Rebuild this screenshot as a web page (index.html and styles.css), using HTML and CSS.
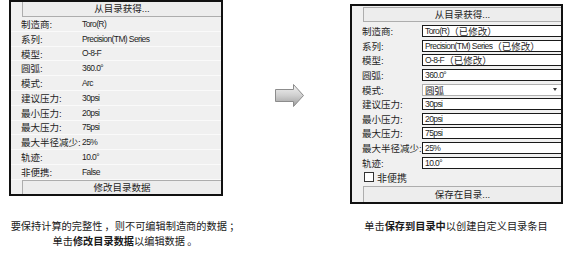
FILE: index.html
```html
<!DOCTYPE html>
<html lang="zh">

<head>
    <meta charset="UTF-8">
    <meta name="viewport" content="width=device-width, initial-scale=1.0">
    <title>目录数据</title>
    <link rel="stylesheet" href="styles.css">
</head>

<body>
    <div class="page">
        <div class="panel panel-left">
            <div class="btn btn-top">从目录获得...</div>
            <div class="row"><span class="label">制造商:</span><span class="value">Toro(R)</span></div>
            <div class="row"><span class="label">系列:</span><span class="value">Precision(TM) Series</span></div>
            <div class="row"><span class="label">模型:</span><span class="value">O-8-F</span></div>
            <div class="row"><span class="label">圆弧:</span><span class="value">360.0°</span></div>
            <div class="row"><span class="label">模式:</span><span class="value">Arc</span></div>
            <div class="row"><span class="label">建议压力:</span><span class="value">30psi</span></div>
            <div class="row"><span class="label">最小压力:</span><span class="value">20psi</span></div>
            <div class="row"><span class="label">最大压力:</span><span class="value">75psi</span></div>
            <div class="row"><span class="label">最大半径减少:</span><span class="value">25%</span></div>
            <div class="row"><span class="label">轨迹:</span><span class="value">10.0°</span></div>
            <div class="row"><span class="label">非便携:</span><span class="value">False</span></div>
            <div class="btn btn-bottom">修改目录数据</div>
        </div>

        <div class="arrow">
            <svg width="30" height="23" viewBox="0 0 30 23">
                <defs>
                    <linearGradient id="arrowFill" x1="0" y1="0" x2="0" y2="1">
                        <stop offset="0" stop-color="#f4f4f4" />
                        <stop offset="0.5" stop-color="#cfcfcf" />
                        <stop offset="1" stop-color="#9c9c9c" />
                    </linearGradient>
                </defs>
                <path d="M0.5 5.5 H18.5 V0.5 L28.5 11.5 L18.5 22.5 V17.5 H0.5 Z" fill="url(#arrowFill)" stroke="#8c8c8c" stroke-width="1" />
            </svg>
        </div>

        <div class="panel panel-right">
            <div class="btn btn-top">从目录获得...</div>
            <div class="fields">
                <div class="row"><span class="label">制造商:</span><span class="field"><span class="value">Toro(R)</span><span class="note">（已修改）</span></span></div>
                <div class="row"><span class="label">系列:</span><span class="field"><span class="value">Precision(TM) Series</span><span class="note">（已修改）</span></span></div>
                <div class="row"><span class="label">模型:</span><span class="field"><span class="value">O-8-F</span><span class="note">（已修改）</span></span></div>
                <div class="row"><span class="label">圆弧:</span><span class="field"><span class="value">360.0°</span></span></div>
                <div class="row"><span class="label">模式:</span><span class="field field-select"><span class="note">圆弧</span><span class="caret"></span></span></div>
                <div class="row"><span class="label">建议压力:</span><span class="field"><span class="value">30psi</span></span></div>
                <div class="row"><span class="label">最小压力:</span><span class="field"><span class="value">20psi</span></span></div>
                <div class="row"><span class="label">最大压力:</span><span class="field"><span class="value">75psi</span></span></div>
                <div class="row"><span class="label">最大半径减少:</span><span class="field"><span class="value">25%</span></span></div>
                <div class="row"><span class="label">轨迹:</span><span class="field"><span class="value">10.0°</span></span></div>
                <div class="row check-row"><span class="checkbox"></span><span>非便携</span></div>
            </div>
            <div class="btn btn-save">保存在目录...</div>
        </div>

        <p class="caption caption-left">要保持计算的完整性 ，则不可编辑制造商的数据 ；<br>单击<b>修改目录数据</b>以编辑数据 。</p>
        <p class="caption caption-right">单击<b>保存到目录中</b>以创建自定义目录条目</p>
    </div>
</body>

</html>
```

FILE: styles.css
```css
body {
    margin: 0;
    font-family: "Liberation Sans", "Noto Sans CJK SC", sans-serif;
    background-color: #ffffff;
    color: #1e1e1e;
}

.page {
    display: grid;
    grid-template-columns: 250px 90px 224px;
    grid-template-rows: 206px auto;
}

.panel {
    box-sizing: border-box;
    border: 2px solid #111111;
    background: #f0f0f0;
    overflow: hidden;
    font-size: 9.5px;
}

.panel-left {
    margin-left: 9px;
    width: 214px;
    height: 196px;
}

.panel-right {
    margin: 4px 0 0 10px;
    width: 213px;
    height: 200px;
}

.btn {
    box-sizing: border-box;
    margin-left: 11px;
    background: #ededed;
    border: 1px solid #adadad;
    border-right: none;
    text-align: center;
}

.panel-left .btn-top {
    height: 15px;
    line-height: 14px;
    border-top: none;
}

.btn-bottom {
    height: 14px;
    line-height: 13px;
    border-bottom: none;
}

.panel-right .btn-top {
    margin-top: 1px;
    height: 15px;
    line-height: 13px;
}

.btn-save {
    height: 17px;
    line-height: 15px;
    margin-top: 1px;
}

.row {
    display: flex;
    align-items: center;
    box-sizing: border-box;
    height: 14.8px;
    border-bottom: 1px solid #fafafa;
}

.label {
    flex: none;
    width: 61px;
    padding-left: 10px;
}

.value {
    font-size: 8.5px;
    letter-spacing: -0.6px;
}

.fields {
    margin-top: 2px;
}

.fields .row {
    height: 14.6px;
    border-bottom: none;
}

.fields .label {
    width: 60px;
}

.field {
    flex: 1;
    display: flex;
    align-items: center;
    box-sizing: border-box;
    height: 12px;
    padding-left: 2px;
    background: #ffffff;
    border: 1px solid #1a1a1a;
    border-right: none;
}

.note {
    font-family: "Noto Sans CJK SC", sans-serif;
    font-size: 9.5px;
    line-height: 10px;
}

.field-select {
    justify-content: space-between;
    border-color: #b0b0b0;
}

.caret {
    margin-right: 4px;
    border-left: 2.5px solid transparent;
    border-right: 2.5px solid transparent;
    border-top: 3px solid #333333;
}

.check-row {
    padding-left: 12px;
    font-size: 10px;
    font-family: "Noto Sans CJK SC", sans-serif;
}

.checkbox {
    box-sizing: border-box;
    width: 10px;
    height: 10px;
    margin-right: 3px;
    background: #ffffff;
    border: 1px solid #333333;
}

.arrow {
    padding: 84px 0 0 25px;
}

.caption {
    margin: 13px 0 0;
    font-family: "Noto Sans CJK SC", sans-serif;
    font-size: 10.2px;
    line-height: 14.8px;
    text-align: center;
    color: #1a1a1a;
}

.caption b {
    font-weight: 700;
}

.caption-left {
    grid-column: 1;
}

.caption-right {
    grid-column: 3;
    padding-left: 8px;
}
```
